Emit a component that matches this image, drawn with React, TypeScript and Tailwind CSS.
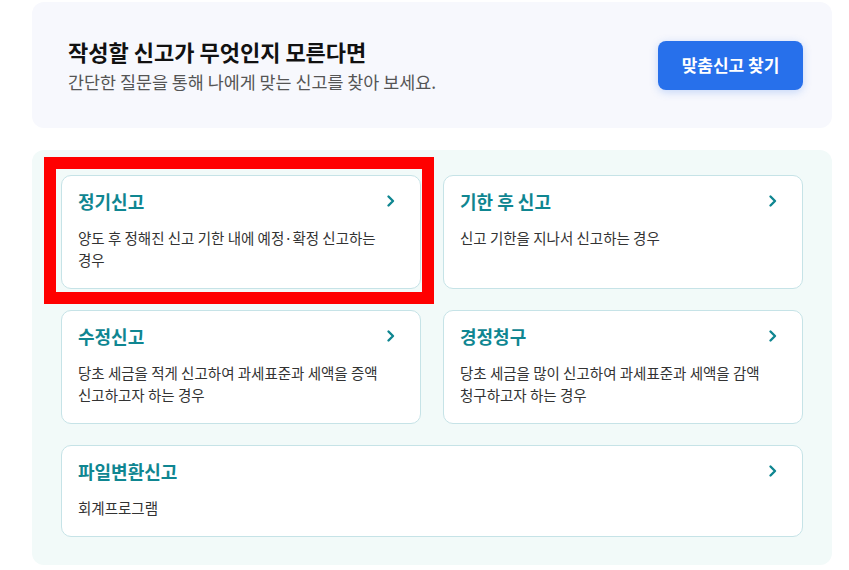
import React from 'react'

const KR = { fontFamily: '"Noto Sans CJK KR", "Noto Sans", sans-serif' }

type Filing = { title: string; desc: string; wide?: boolean }

const filings: Filing[] = [
  { title: '정기신고', desc: '양도 후 정해진 신고 기한 내에 예정·확정 신고하는 경우' },
  { title: '기한 후 신고', desc: '신고 기한을 지나서 신고하는 경우' },
  { title: '수정신고', desc: '당초 세금을 적게 신고하여 과세표준과 세액을 증액 신고하고자 하는 경우' },
  { title: '경정청구', desc: '당초 세금을 많이 신고하여 과세표준과 세액을 감액 청구하고자 하는 경우' },
  { title: '파일변환신고', desc: '회계프로그램', wide: true },
]

function Chevron() {
  return (
    <svg width="10" height="14" viewBox="0 0 10 14" fill="none" className="shrink-0">
      <path d="M2.5 2.5 L7 7 L2.5 11.5" stroke="#0f8691" strokeWidth="2.4" strokeLinecap="round" strokeLinejoin="round" />
    </svg>
  )
}

function FilingCard({ item }: { item: Filing }) {
  return (
    <button
      className={`flex flex-col rounded-[10px] border border-[#c6e3e7] bg-white pl-4 pr-6 pt-[13px] pb-[17px] text-left ${item.wide ? 'col-span-2' : ''}`}
    >
      <div className="flex items-center justify-between">
        <span className="text-[18px] font-bold leading-6 text-[#0f8691]">{item.title}</span>
        <Chevron />
      </div>
      <p className="mt-[14px] max-w-[320px] break-keep text-[14.5px] leading-[22px] text-[#333]">{item.desc}</p>
    </button>
  )
}

export default function App() {
  return (
    <div className="relative h-[570px] w-[849px] bg-white pt-[2px]" style={KR}>
      <div className="ml-8 flex h-[126px] w-[800px] items-center justify-between rounded-xl bg-[#f7f8fd] pl-9 pr-[29px]">
        <div className="flex flex-col gap-[5px]">
          <h2 className="text-[22px] font-bold leading-7 text-[#111]">작성할 신고가 무엇인지 모른다면</h2>
          <p className="text-[17.4px] leading-6 text-[#555]">간단한 질문을 통해 나에게 맞는 신고를 찾아 보세요.</p>
        </div>
        <button className="h-[49px] w-[145px] rounded-lg bg-[#2770eb] text-[17px] font-bold text-white shadow-[0_2px_8px_rgba(39,112,235,0.25)]">
          맞춤신고 찾기
        </button>
      </div>

      <div className="ml-8 mt-[22px] grid w-[800px] grid-cols-2 gap-x-[22px] gap-y-[21px] rounded-xl bg-[#f2faf9] px-[29px] pt-[25px] pb-7">
        {filings.map((f) => (
          <FilingCard key={f.title} item={f} />
        ))}
      </div>

      {/* selection highlight */}
      <div className="pointer-events-none absolute left-[44px] top-[157px] h-[147px] w-[390px] border-[12px] border-[#ff0000]" />
    </div>
  )
}
